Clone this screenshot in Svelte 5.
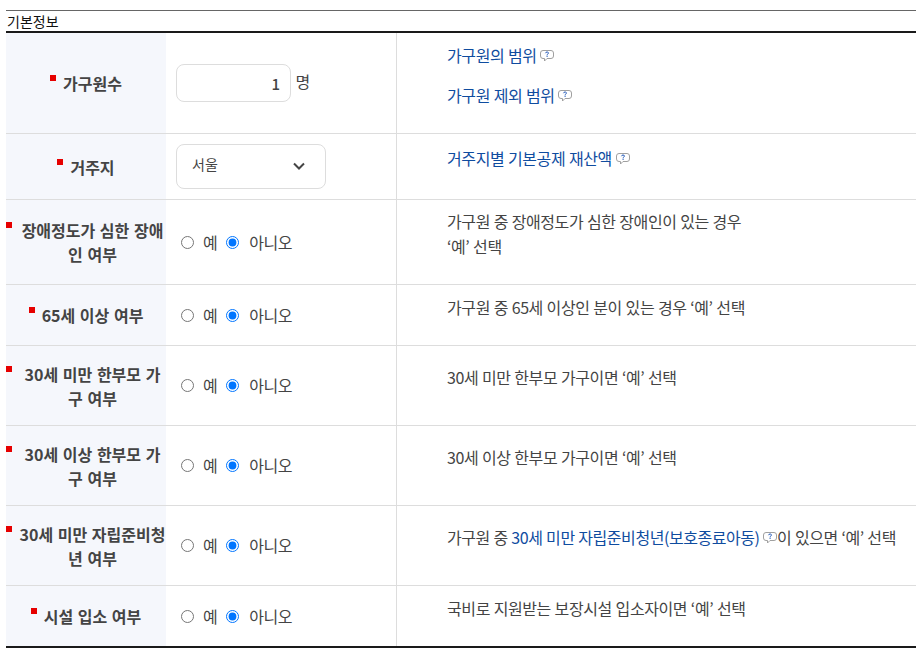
<script>
  const rows = [
    { key: 'size', label: '가구원수', control: 'number', h: 101 },
    { key: 'region', label: '거주지', control: 'select', h: 66 },
    { key: 'a', label: '장애정도가 심한 장애인 여부', control: 'radio', h: 85, note: ['가구원 중 장애정도가 심한 장애인이 있는 경우', '‘예’ 선택'] },
    { key: 'b', label: '65세 이상 여부', control: 'radio', h: 61, note: ['가구원 중 65세 이상인 분이 있는 경우 ‘예’ 선택'] },
    { key: 'c', label: '30세 미만 한부모 가구 여부', control: 'radio', h: 80, note: ['30세 미만 한부모 가구이면 ‘예’ 선택'] },
    { key: 'd', label: '30세 이상 한부모 가구 여부', control: 'radio', h: 80, note: ['30세 이상 한부모 가구이면 ‘예’ 선택'] },
    { key: 'e', label: '30세 미만 자립준비청년 여부', control: 'radio', h: 80 },
    { key: 'f', label: '시설 입소 여부', control: 'radio', h: 60, note: ['국비로 지원받는 보장시설 입소자이면 ‘예’ 선택'] }
  ];
</script>

{#snippet help()}
  <svg class="help" width="14" height="12" viewBox="0 0 14 12" aria-hidden="true">
    <path d="M3 .5h8A2.500 2.500 0 0 1 13.500 3v3A2.500 2.500 0 0 1 11 8.500H7L4.500 11V8.500H3A2.500 2.500 0 0 1 .5 6V3A2.500 2.500 0 0 1 3 .5z" fill="#fff" stroke="#a0a0a0" stroke-width="1"/>
    <path d="M5.500 3.200c.1-.8.8-1.200 1.500-1.200.9 0 1.500.4 1.500 1.100 0 .9-1.400.8-1.400 1.700" fill="none" stroke="#1f56b8" stroke-width="1"/>
    <rect x="6.500" y="5.600" width="1.200" height="1.200" fill="#1f56b8"/>
  </svg>
{/snippet}

<div class="wrap">
  <table>
    <caption>기본정보</caption>
    <colgroup><col class="c1" /><col class="c2" /><col /></colgroup>
    <tbody>
      {#each rows as row}
        <tr style="height:{row.h}px">
          <th scope="row"><span class="req">{row.label}</span></th>
          <td class="ctl">
            {#if row.control === 'number'}
              <input class="num" type="text" value="1" readonly /> <span class="unit">명</span>
            {:else if row.control === 'select'}
              <div class="sel">
                <span>서울</span>
                <svg width="14" height="9" viewBox="0 0 14 9" aria-hidden="true"><path d="M2 1.500l5 5 5-5" fill="none" stroke="#444" stroke-width="2"/></svg>
              </div>
            {:else}
              <div class="radios">
                <label><input type="radio" name={row.key} />예</label>
                <label><input type="radio" name={row.key} checked />아니오</label>
              </div>
            {/if}
          </td>
          <td class="note">
            {#if row.key === 'size'}
              <p><a href="#a">가구원의 범위</a> {@render help()}</p>
              <p><a href="#b">가구원 제외 범위</a> {@render help()}</p>
            {:else if row.key === 'region'}
              <p><a href="#c">거주지별 기본공제 재산액</a> {@render help()}</p>
            {:else if row.key === 'e'}
              <p class="nowrap">가구원 중 <a href="#d">30세 미만 자립준비청년(보호종료아동)</a> {@render help()}이 있으면 ‘예’ 선택</p>
            {:else}
              <p>{#each row.note as line, i}{#if i}<br />{/if}{line}{/each}</p>
            {/if}
          </td>
        </tr>
      {/each}
    </tbody>
  </table>
</div>

<style>
  :global(body) {
    margin: 0;
    background: #fff;
  }
  .wrap {
    padding: 10px 0 0 6px;
    font-family: "Noto Sans CJK KR", "Noto Sans", sans-serif;
    font-size: 16px;
    color: #444;
  }
  table {
    width: 910px;
    table-layout: fixed;
    border-collapse: separate;
    border-spacing: 0;
    border-bottom: 2px solid #1a1a1a;
  }
  caption {
    height: 20px;
    padding-left: 1px;
    border-top: 1px solid #666;
    border-bottom: 2px solid #1a1a1a;
    box-sizing: content-box;
    text-align: left;
    font-size: 14px;
    line-height: 20px;
    color: #111;
  }
  .c1 { width: 160px; }
  .c2 { width: 231px; }
  th, td {
    padding: 0;
    border-bottom: 1px solid #ddd;
  }
  tr:last-child th, tr:last-child td { border-bottom: 0; }
  th {
    background: #f5f7fc;
    font-weight: 700;
    line-height: 24px;
    text-align: center;
    word-break: break-all;
    word-spacing: 1px;
  }
  .req {
    display: inline-block;
    position: relative;
    padding-left: 13px;
  }
  .req::before {
    content: "";
    position: absolute;
    left: 0;
    top: 4px;
    width: 6px;
    height: 6px;
    background: #e60000;
  }
  .ctl {
    padding: 0 10px;
    box-sizing: border-box;
    border-right: 1px solid #ddd;
  }
  .num {
    width: 115px;
    height: 38px;
    box-sizing: border-box;
    padding: 0 10px;
    border: 1px solid #ddd;
    border-radius: 8px;
    outline: 0;
    font: 500 15px "Noto Sans CJK KR", sans-serif;
    color: #444;
    text-align: right;
    vertical-align: middle;
  }
  .unit {
    vertical-align: middle;
    position: relative;
    top: -2px;
    margin-left: 1px;
  }
  .sel {
    display: flex;
    align-items: center;
    justify-content: space-between;
    width: 150px;
    height: 45px;
    box-sizing: border-box;
    padding: 0 19px 0 15px;
    border: 1px solid #ddd;
    border-radius: 8px;
    font-size: 14px;
  }
  .sel span {
    padding-bottom: 6px;
  }
  .radios {
    display: flex;
    gap: 4px;
    margin-bottom: 0.5px;
    letter-spacing: -0.5px;
  }
  .radios label {
    display: flex;
    align-items: center;
  }
  .radios input {
    margin: 0.5px 9px 0 5px;
  }
  .radios label + label input {
    margin-right: 10px;
  }
  .note {
    padding-left: 50px;
    line-height: 25px;
    letter-spacing: -0.4px;
    word-spacing: 0.5px;
  }
  .note p {
    margin: 0 0 16px;
  }
  .note p:first-child:not(:last-child) {
    margin-bottom: 15px;
  }
  .nowrap {
    white-space: nowrap;
    letter-spacing: -0.45px;
  }
  a {
    color: #0f4c9f;
    text-decoration: none;
  }
  .help {
    vertical-align: 0;
  }
</style>
